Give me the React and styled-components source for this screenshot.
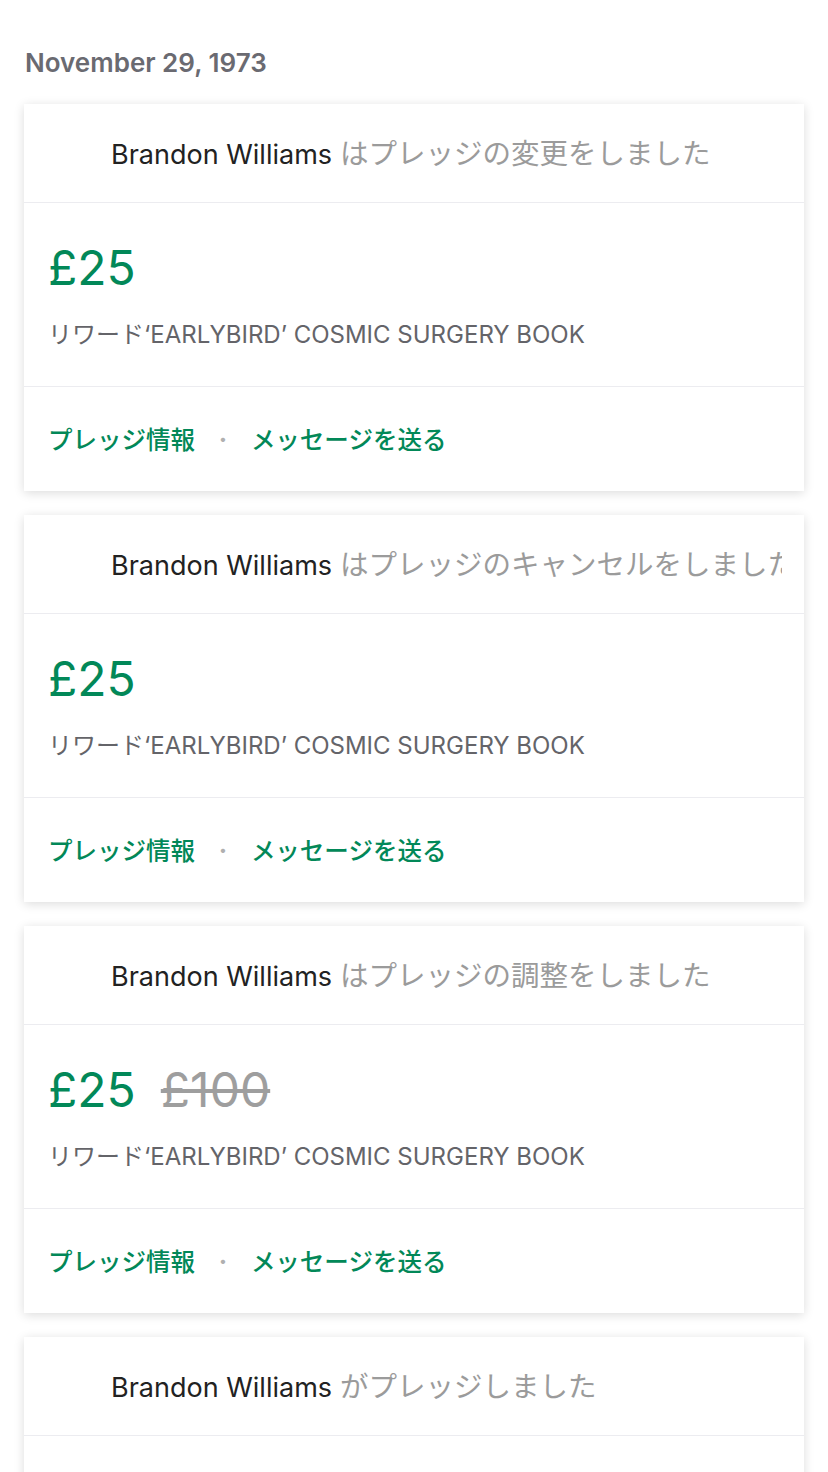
import React from 'react'
import styled, { createGlobalStyle } from 'styled-components'

const GlobalStyle = createGlobalStyle`
  body {
    margin: 0;
    background: #fff;
    font-family: Inter, "Noto Sans CJK JP", sans-serif;
  }
`

const activities = [
  { id: 1, action: 'はプレッジの変更をしました', amount: '£25' },
  { id: 2, action: 'はプレッジのキャンセルをしました', amount: '£25' },
  { id: 3, action: 'はプレッジの調整をしました', amount: '£25', previous: '£100' },
  { id: 4, action: 'がプレッジしました', amount: '£25' },
]

function ActivityCard({ item }) {
  return (
    <StCard>
      <StHeader>
        <StAvatar />
        <StHeaderText>
          <StName>Brandon Williams</StName> {item.action}
        </StHeaderText>
      </StHeader>
      <StBody>
        <StAmountRow>
          <StAmount>{item.amount}</StAmount>
          {item.previous && <StPrevious>{item.previous}</StPrevious>}
        </StAmountRow>
        <StReward>リワード‘EARLYBIRD’ COSMIC SURGERY BOOK</StReward>
      </StBody>
      <StFooter>
        <StLink>プレッジ情報</StLink>
        <StDot>•</StDot>
        <StLink>メッセージを送る</StLink>
      </StFooter>
    </StCard>
  )
}

export default function App() {
  return (
    <StPage>
      <GlobalStyle />
      <StDate>November 29, 1973</StDate>
      <StList>
        {activities.map((item) => (
          <ActivityCard key={item.id} item={item} />
        ))}
      </StList>
    </StPage>
  )
}

const StPage = styled.div`
  padding: 48px 24px 24px;
  height: 1472px;
  box-sizing: border-box;
  overflow: hidden;
`

const StDate = styled.h2`
  margin: 0 0 26px 1px;
  font-size: 26px;
  line-height: 30px;
  font-weight: 600;
  color: #6a6a71;
`

const StList = styled.div`
  display: flex;
  flex-direction: column;
  gap: 24px;
`

const StCard = styled.div`
  background: #fff;
  box-shadow: 0 2px 10px rgba(0, 0, 0, 0.14);
`

const StHeader = styled.div`
  display: flex;
  align-items: center;
  box-sizing: border-box;
  height: 99px;
  padding: 0 22px 4px 24px;
  border-bottom: 1px solid #ececf0;
  overflow: hidden;
`

const StAvatar = styled.div`
  flex: none;
  width: 40px;
  height: 40px;
  margin-right: 23px;
`

const StHeaderText = styled.div`
  font-size: 28.5px;
  color: #9b9b9b;
  white-space: nowrap;
  overflow: hidden;
`

const StName = styled.span`
  font-size: 27px;
  color: #222;
`

const StBody = styled.div`
  padding: 35px 24px 35px;
  border-bottom: 1px solid #ececf0;
`

const StAmountRow = styled.div`
  display: flex;
  align-items: baseline;
  gap: 25px;
`

const StAmount = styled.span`
  font-size: 48px;
  line-height: 60px;
  color: #028858;
`

const StPrevious = styled.span`
  font-size: 48px;
  line-height: 60px;
  color: #9e9e9e;
  text-decoration: line-through;
`

const StReward = styled.div`
  margin-top: 21px;
  font-size: 24px;
  line-height: 32px;
  color: #646469;
`

const StFooter = styled.div`
  display: flex;
  align-items: center;
  height: 104px;
  padding: 0 24px 2px;
  box-sizing: border-box;
`

const StLink = styled.a`
  font-size: 24.5px;
  font-weight: 500;
  color: #028858;
  cursor: pointer;
`

const StDot = styled.span`
  margin: 0 24px 0 24px;
  font-size: 14px;
  color: #b0b0b0;
`
